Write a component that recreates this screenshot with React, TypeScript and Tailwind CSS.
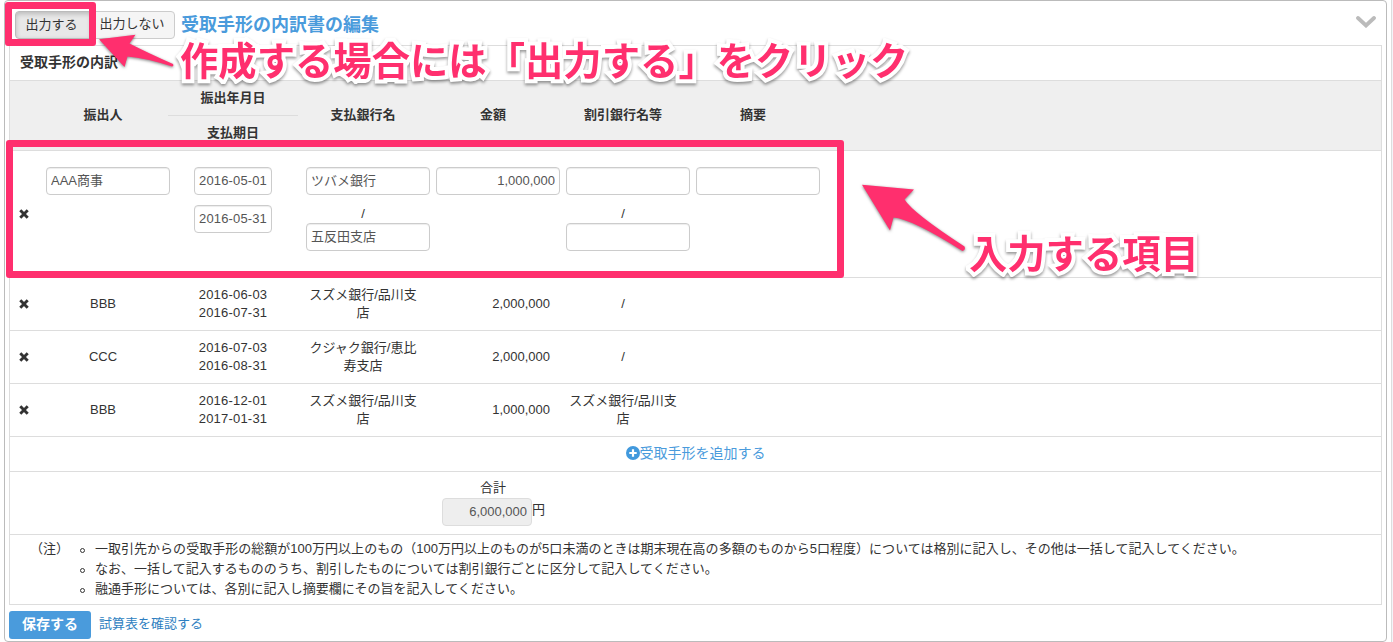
import type { ReactNode } from "react";

interface Bill {
  drawer: string;
  issued: string;
  due: string;
  bank: string;
  amount: string;
  discountBank: string;
}

const bills: Bill[] = [
  {
    drawer: "BBB",
    issued: "2016-06-03",
    due: "2016-07-31",
    bank: "スズメ銀行/品川支店",
    amount: "2,000,000",
    discountBank: "/",
  },
  {
    drawer: "CCC",
    issued: "2016-07-03",
    due: "2016-08-31",
    bank: "クジャク銀行/恵比寿支店",
    amount: "2,000,000",
    discountBank: "/",
  },
  {
    drawer: "BBB",
    issued: "2016-12-01",
    due: "2017-01-31",
    bank: "スズメ銀行/品川支店",
    amount: "1,000,000",
    discountBank: "スズメ銀行/品川支店",
  },
];

const notes = [
  "一取引先からの受取手形の総額が100万円以上のもの（100万円以上のものが5口未満のときは期末現在高の多額のものから5口程度）については格別に記入し、その他は一括して記入してください。",
  "なお、一括して記入するもののうち、割引したものについては割引銀行ごとに区分して記入してください。",
  "融通手形については、各別に記入し摘要欄にその旨を記入してください。",
];

function RemoveIcon() {
  return (
    <svg viewBox="0 0 10 10" className="w-[10px] h-[10px] ml-[9px]">
      <path d="M2.3 2.3 7.7 7.7M7.7 2.3 2.3 7.7" stroke="#333" strokeWidth="2.9" strokeLinecap="square" />
    </svg>
  );
}

function Field({ value = "", className = "w-[124px] pb-[3px]" }: { value?: string; className?: string }) {
  return (
    <input
      type="text"
      defaultValue={value}
      className={`block h-7 shrink-0 rounded-[4px] border border-[#ccc] bg-white px-1 text-[13px] text-[#555] shadow-[inset_0_1px_1px_rgba(0,0,0,0.075)] ${className}`}
    />
  );
}

function Cell({ children, className = "" }: { children?: ReactNode; className?: string }) {
  return <div className={`w-[130px] shrink-0 px-2 text-center ${className}`}>{children}</div>;
}

function Callout({ children, className }: { children: ReactNode; className: string }) {
  return (
    <div
      className={`absolute whitespace-nowrap text-[38.3px] leading-[48px] font-bold text-[#ff2f6e] [-webkit-text-stroke:8px_white] [paint-order:stroke_fill] [stroke-linejoin:round] drop-shadow-[0_2px_1.5px_rgba(0,0,0,0.4)] ${className}`}
    >
      {children}
    </div>
  );
}

export default function App() {
  return (
    <div className="relative h-[642px] w-[1393px] overflow-hidden bg-white pl-1 font-['Liberation_Sans','Noto_Sans_CJK_JP',sans-serif] text-[13px] leading-[18px] text-[#333]">
      <div className="flex h-full">
        <div className="h-[642px] w-[1383px] rounded-[4px] border border-[#bbb] px-1">
          <div className="flex h-11 items-start pt-[10px]">
            <button className="ml-[6px] h-7 w-[77px] rounded-l-[4px] border border-[#bbb] bg-[#e8e8e8] pb-px pr-[4px] text-[13px] shadow-[inset_0_2px_5px_rgba(0,0,0,0.2)]">
              出力する
            </button>
            <button className="-ml-px h-7 w-[84px] rounded-r-[4px] border border-[#ccc] bg-[#f5f5f5] pb-[2px] pr-[2px] text-[13px]">
              出力しない
            </button>
            <h2 className="ml-[6px] mt-px text-lg leading-[26px] font-bold text-[#4a9bdc]">受取手形の内訳書の編集</h2>
            <svg viewBox="0 0 20 12" className="ml-auto mr-[6px] mt-[5px] h-3 w-5" fill="none">
              <path d="M2 2 10 9.5 18 2" stroke="#bbb" strokeWidth="3.8" strokeLinecap="round" />
            </svg>
          </div>

          <div className="h-[560px] w-[1373px] border border-[#ddd]">
            <h3 className="h-[35px] border-b border-[#ddd] pl-[10px] text-sm leading-[33px] font-bold">受取手形の内訳</h3>

            <div className="flex h-[70px] items-center border-b border-[#ddd] bg-[#efefef] pl-7 font-bold">
              <Cell className="pb-[2px]">振出人</Cell>
              <div className="w-[130px] text-center">
                <div className="h-[34px] leading-[34px]">振出年月日</div>
                <div className="h-[35px] border-t border-[#ddd] leading-[34px]">支払期日</div>
              </div>
              <Cell className="pb-[2px]">支払銀行名</Cell>
              <Cell className="pb-[2px]">金額</Cell>
              <Cell className="pb-[2px]">割引銀行名等</Cell>
              <Cell className="pb-[2px]">摘要</Cell>
            </div>

            <div className="flex h-[127px] border-b border-[#ddd]">
              <div className="flex w-7 items-center">
                <RemoveIcon />
              </div>
              <Cell className="pt-4">
                <Field value="AAA商事" />
              </Cell>
              <Cell className="flex flex-col items-center gap-[10px] pt-4">
                <Field value="2016-05-01" className="w-[78px] pb-px tracking-[0.15px]" />
                <Field value="2016-05-31" className="w-[78px] pb-px tracking-[0.15px]" />
              </Cell>
              <Cell className="pt-4">
                <Field value="ツバメ銀行" />
                <div className="h-7 pt-[10px]">/</div>
                <Field value="五反田支店" />
              </Cell>
              <Cell className="pt-4">
                <Field value="1,000,000" className="w-[124px] pb-px text-right" />
              </Cell>
              <Cell className="pt-4">
                <Field />
                <div className="h-7 pt-[10px]">/</div>
                <Field />
              </Cell>
              <Cell className="pt-4">
                <Field />
              </Cell>
            </div>

            {bills.map((bill) => (
              <div key={bill.issued} className="flex h-[53px] items-center border-b border-[#ddd]">
                <div className="w-7">
                  <RemoveIcon />
                </div>
                <Cell>{bill.drawer}</Cell>
                <Cell className="tracking-[0.2px]">
                  {bill.issued}
                  <br />
                  {bill.due}
                </Cell>
                <Cell className="break-all">{bill.bank}</Cell>
                <Cell className="text-right">{bill.amount}</Cell>
                <Cell className="break-all">{bill.discountBank}</Cell>
              </div>
            ))}

            <div className="flex h-[35px] items-center justify-center border-b border-[#ddd] pb-[2px] text-sm text-[#4a9bdc]">
              <svg viewBox="0 0 14 14" className="h-[14px] w-[14px]">
                <circle cx="7" cy="7" r="7" fill="#4199dd" />
                <path d="M7 3.3v7.4M3.3 7h7.4" stroke="white" strokeWidth="2.2" />
              </svg>
              受取手形を追加する
            </div>

            <div className="h-[63px] border-b border-[#ddd] pl-[432px] pt-[7px]">
              <div className="w-[102px] text-center">合計</div>
              <div className="mt-px flex">
                <input
                  readOnly
                  value="6,000,000"
                  className="h-7 w-[90px] rounded-[4px] border border-[#ddd] bg-[#eee] px-1 pb-px text-right text-[13px] text-[#555]"
                />
                <span className="pt-[3px]">円</span>
              </div>
            </div>

            <div className="flex pl-5 pt-1 leading-5">
              <span className="w-[65px]">（注）</span>
              <ul className="tracking-[0.02px]">
                {notes.map((note) => (
                  <li key={note} className="relative whitespace-nowrap">
                    <i className="absolute -left-[15px] top-[9px] size-[5px] rounded-full border border-[#333]" />
                    {note}
                  </li>
                ))}
              </ul>
            </div>
          </div>

          <div className="flex pt-[6px]">
            <button className="h-7 w-[82px] rounded-[3px] bg-[#4a9bdc] pb-[2px] text-sm font-bold text-white">保存する</button>
            <a className="ml-2 pt-1 text-[#2f7fc1]">試算表を確認する</a>
          </div>
        </div>
        <div className="ml-1 w-[2px] border-l border-[#ddd] bg-[#f4f4f9]" />
      </div>

      {/* annotations over the form */}
      <div className="absolute left-[5px] top-[2px] h-[44px] w-[91px] rounded-[3px] border-[7px] border-[#ff2f6e]" />
      <div className="absolute left-[6px] top-[140px] h-[138px] w-[838px] rounded-[3px] border-[7px] border-[#ff2f6e]" />
      <Callout className="left-[180px] top-[38px] tracking-[0.04px]">作成する場合には「出力する」をクリック</Callout>
      <Callout className="left-[969px] top-[231px]">入力する項目</Callout>
      <svg
        viewBox="0 0 1393 642"
        className="pointer-events-none absolute left-0 top-0 h-[642px] w-[1393px] drop-shadow-[0_1px_1.5px_rgba(0,0,0,0.5)]"
        fill="#ff2f6e"
      >
        <path d="M99 39.3 135.500 34.800 129.500 43.500Q148 53 173 64Q174 66 172 66.500Q146 58 127.500 56.500L124.500 67Z" />
        <path d="M862 184.700 914 189.500 904.500 199.500Q913 213 964.500 246.500Q966 250 962.500 251Q912 219 893.500 217.500L890 230.500Z" />
      </svg>
    </div>
  );
}
